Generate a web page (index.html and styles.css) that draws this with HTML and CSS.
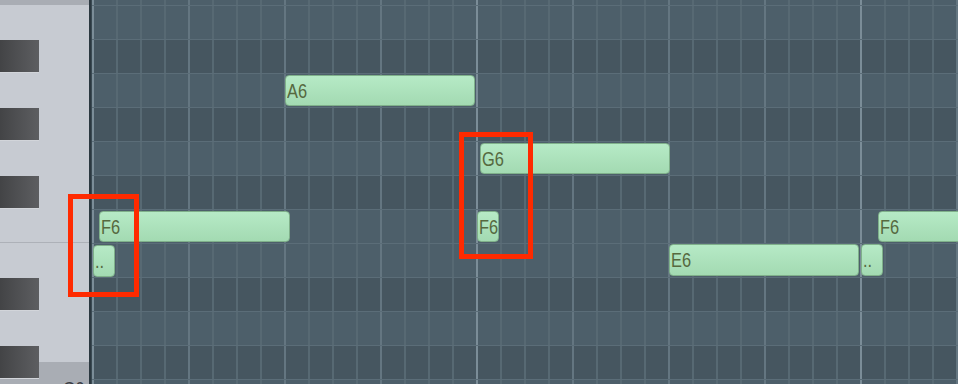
FILE: index.html
```html
<!DOCTYPE html>
<html>
<head>
<meta charset="utf-8">
<link rel="stylesheet" href="styles.css">
</head>
<body>
<div class="roll">
  <div class="keys">
    <div class="wkey c top"></div>
    <div class="wkey h51"></div>
    <div class="wkey h68"></div>
    <div class="wkey h68"></div>
    <div class="wkey h51 ef"></div>
    <div class="wkey h51"></div>
    <div class="wkey h68"></div>
    <div class="wkey c bottom"><span class="klabel">C6</span></div>
    <div class="bkey" style="top:39px"></div>
    <div class="bkey" style="top:107px"></div>
    <div class="bkey" style="top:175px"></div>
    <div class="bkey" style="top:277px"></div>
    <div class="bkey" style="top:345px"></div>
  </div>
  <div class="divider"></div>
  <div class="grid">
    <div class="row light first"></div>
    <div class="row light"></div>
    <div class="row dark"></div>
    <div class="row light"></div>
    <div class="row dark"></div>
    <div class="row light"></div>
    <div class="row dark"></div>
    <div class="row light"></div>
    <div class="row light"></div>
    <div class="row dark"></div>
    <div class="row light"></div>
    <div class="row dark"></div>
    <div class="row light"></div>

    <div class="note" style="left:1px;top:245px;width:22px;height:32px"><span class="lbl">..</span></div>
    <div class="note" style="left:7px;top:211px;width:191px;height:31px"><span class="lbl">F6</span></div>
    <div class="note" style="left:193px;top:75px;width:190px;height:31px"><span class="lbl">A6</span></div>
    <div class="note" style="left:388px;top:143px;width:190px;height:31px"><span class="lbl">G6</span></div>
    <div class="note" style="left:385px;top:211px;width:22px;height:31px"><span class="lbl">F6</span></div>
    <div class="note" style="left:577px;top:244px;width:190px;height:32px"><span class="lbl">E6</span></div>
    <div class="note" style="left:769px;top:244px;width:22px;height:32px"><span class="lbl">..</span></div>
    <div class="note" style="left:786px;top:211px;width:120px;height:31px"><span class="lbl">F6</span></div>
  </div>
  <div class="mark" style="left:68px;top:194px;width:71px;height:103px"></div>
  <div class="mark" style="left:459px;top:132px;width:74px;height:127px"></div>
</div>
</body>
</html>
```
FILE: styles.css
```css
html, body {
  margin: 0;
  padding: 0;
  background: #465660;
  overflow: hidden;
}
.roll {
  position: relative;
  display: flex;
  width: 958px;
  height: 384px;
  overflow: hidden;
}
.keys {
  position: relative;
  width: 89px;
  flex: none;
  display: flex;
  flex-direction: column;
  background: #c7cbd2;
}
.wkey {
  flex: none;
  background: #c7cbd2;
  box-sizing: border-box;
}
.wkey.c { background: #a9adb4; }
.wkey.top { height: 5px; }
.wkey.h51 { height: 51px; }
.wkey.h68 { height: 68px; }
.wkey.ef { border-bottom: 1px solid #adb1b8; }
.wkey.bottom {
  flex: 1;
  display: flex;
  justify-content: flex-end;
  padding: 17px 4px 0 0;
}
.klabel {
  display: inline-block;
  font-family: "Liberation Sans", sans-serif;
  font-size: 20px;
  line-height: 20px;
  color: #3b3e45;
  transform: scaleX(0.85);
  transform-origin: right top;
}
.bkey {
  position: absolute;
  left: 0;
  width: 39px;
  height: 34px;
  box-sizing: border-box;
  border-top: 1px solid #c7cbd2;
  border-bottom: 1px solid #d2d5da;
  background: linear-gradient(to right, #434446, #5d5e61);
}
.divider {
  width: 3px;
  flex: none;
  background: linear-gradient(to right, #2b3840 0 2px, #3a4a53 2px);
}
.grid {
  position: relative;
  flex: 1;
  display: flex;
  flex-direction: column;
}
.row {
  flex: none;
  height: 34px;
  box-sizing: border-box;
  border-top: 1px solid #5b6d78;
  background-image:
    repeating-linear-gradient(to right, #7b8d98 0 2px, transparent 2px 384px),
    repeating-linear-gradient(to right, #647681 0 2px, transparent 2px 96px),
    repeating-linear-gradient(to right, #576973 0 2px, transparent 2px 24px);
}
.row.first { height: 5px; border-top: none; }
.row.light { background-color: #4d5f6a; }
.row.dark { background-color: #465660; }
.note {
  position: absolute;
  box-sizing: border-box;
  border: 1px solid #7fb08a;
  border-radius: 4px;
  background: linear-gradient(to bottom, #b6eac6, #a3dab2);
  padding-left: 1px;
  white-space: nowrap;
  overflow: hidden;
}
.lbl {
  display: inline-block;
  color: #56693f;
  font-family: "Liberation Sans", sans-serif;
  font-size: 20px;
  line-height: 30px;
  transform: scaleX(0.82);
  transform-origin: left center;
}
.mark {
  position: absolute;
  box-sizing: border-box;
  border: 5px solid #ff2a00;
}
```
